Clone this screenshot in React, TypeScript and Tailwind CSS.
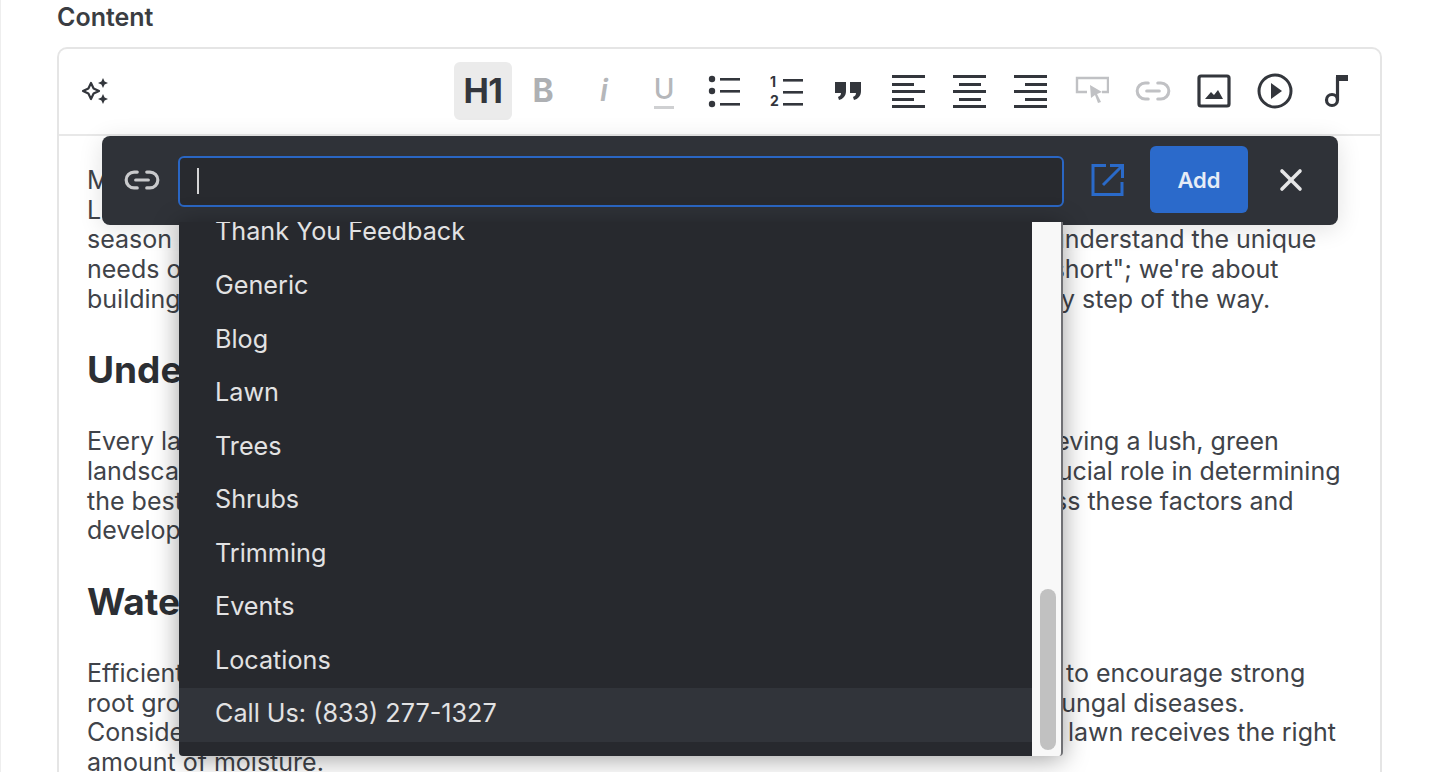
import { Link2, X } from 'lucide-react';

const menuItems = ['Generic', 'Blog', 'Lawn', 'Trees', 'Shrubs', 'Trimming', 'Events', 'Locations'];

function BulletList() {
    return (
        <svg width="34" height="34" viewBox="0 0 34 34" fill="currentColor">
            <circle cx="4" cy="5" r="3.2" />
            <circle cx="4" cy="17" r="3.2" />
            <circle cx="4" cy="30" r="3.2" />
            <rect x="12" y="4" width="20" height="2.6" />
            <rect x="12" y="16" width="20" height="2.6" />
            <rect x="12" y="29" width="20" height="2.6" />
        </svg>
    );
}

function AlignIcon({ kind }: { kind: 'left' | 'center' | 'right' }) {
    const short = kind === 'left' ? 0 : kind === 'center' ? 6 : 11;
    return (
        <svg width="34" height="34" viewBox="0 0 34 34" fill="currentColor">
            <rect x="0" y="1" width="33" height="3" />
            <rect x={short} y="9" width="22" height="3" />
            <rect x="0" y="16" width="33" height="3" />
            <rect x={short} y="24" width="22" height="3" />
            <rect x="0" y="31" width="33" height="3" />
        </svg>
    );
}

function Line({ left, right, className }: { left: string; right?: string; className?: string }) {
    return (
        <div className="flex h-[29.7px] items-center whitespace-nowrap">
            <span className="w-[92px] shrink-0">{left}</span>
            {right && <span className={className}>{right}</span>}
        </div>
    );
}

export default function App() {
    return (
        <div className="h-[772px] overflow-hidden border-l border-[#eeeeee] bg-white pl-[56px] pr-[56px] font-['Inter',sans-serif] text-[#404349]">
            <div className="flex h-[47px] items-start pt-[3px] text-[25px] font-semibold leading-[28px] text-[#3a3d42]">Content</div>

            <div className="relative h-[780px] rounded-t-[10px] border-2 border-b-0 border-[#e5e5e5]">
                <div className="flex h-[87px] items-center justify-between border-b-2 border-[#e8e8e8] pb-[2px] pl-[22px] pr-[12px]">
                    <svg width="30" height="30" viewBox="0 0 30 30" className="text-[#33363c]">
                        <path d="M10 7l2.6 5.4L18 15l-5.4 2.6L10 23l-2.6-5.4L2 15l5.4-2.6z" fill="none" stroke="currentColor" strokeWidth="2.2" strokeLinejoin="round" />
                        <path d="M22 2l1.6 3.4L27 7l-3.4 1.6L22 12l-1.6-3.4L17 7l3.4-1.6z" fill="currentColor" />
                        <path d="M22 18l1.6 3.4L27 23l-3.4 1.6L22 28l-1.6-3.4L17 23l3.4-1.6z" fill="currentColor" />
                    </svg>
                    <div className="flex items-center text-[#33363c]">
                        <span className="flex h-[58px] w-[58px] items-center justify-center rounded-[6px] bg-[#ebebeb] text-[34px] font-bold tracking-[-0.5px]">H1</span>
                        <span className="flex w-[62px] justify-center text-[32px] font-bold text-[#aeb0b3]">B</span>
                        <span className="flex w-[60px] justify-center text-[30px] font-semibold italic text-[#b5b7ba]">i</span>
                        <span className="flex w-[60px] justify-center text-[28px] font-medium text-[#b5b7ba]">
                            <span className="border-b-[3px] border-[#cfd0d2] leading-[34px]">U</span>
                        </span>
                        <span className="flex w-[62px] justify-center"><BulletList /></span>
                        <span className="flex w-[62px] justify-center">
                            <svg width="34" height="34" viewBox="0 0 34 34" fill="currentColor">
                                <text x="0" y="13" fontSize="14" fontWeight="700" fontFamily="Inter">1</text>
                                <text x="0" y="32" fontSize="14" fontWeight="700" fontFamily="Inter">2</text>
                                <rect x="13" y="5" width="20" height="2.6" />
                                <rect x="13" y="17" width="20" height="2.6" />
                                <rect x="13" y="29" width="20" height="2.6" />
                            </svg>
                        </span>
                        <span className="flex w-[60px] justify-center">
                            <svg width="28" height="22" viewBox="0 0 28 22" fill="currentColor">
                                <path d="M1 2h11v9c0 5-3 8-7 9l-1-3c2-1 3-2 3-4H1zM16 2h11v9c0 5-3 8-7 9l-1-3c2-1 3-2 3-4h-6z" />
                            </svg>
                        </span>
                        <span className="flex w-[62px] justify-center"><AlignIcon kind="left" /></span>
                        <span className="flex w-[60px] justify-center"><AlignIcon kind="center" /></span>
                        <span className="flex w-[62px] justify-center"><AlignIcon kind="right" /></span>
                        <span className="flex w-[60px] justify-center text-[#c0c1c4]">
                            <svg width="34" height="30" viewBox="0 0 34 30" fill="none" stroke="currentColor" strokeWidth="2.4">
                                <path d="M12 16H2V2h31v14h-6" />
                                <path d="M15 9l12 7-5 2 4 8-3 1-3-8-4 3z" fill="currentColor" stroke="none" />
                            </svg>
                        </span>
                        <span className="flex w-[62px] justify-center">
                            <Link2 className="h-[38px] w-[38px] text-[#c0c1c4]" strokeWidth={1.9} />
                        </span>
                        <span className="flex w-[60px] justify-center">
                            <svg width="34" height="34" viewBox="0 0 34 34" fill="none" stroke="currentColor" strokeWidth="3.2">
                                <rect x="2" y="2" width="30" height="30" rx="2" />
                                <path d="M8 25l6-7 3 3 4-5 5 9z" fill="currentColor" stroke="none" />
                            </svg>
                        </span>
                        <span className="flex w-[62px] justify-center">
                            <svg width="36" height="36" viewBox="0 0 36 36" fill="none" stroke="currentColor" strokeWidth="3">
                                <circle cx="18" cy="18" r="16" />
                                <path d="M14 10l11 8-11 8z" fill="currentColor" stroke="none" />
                            </svg>
                        </span>
                        <span className="flex w-[62px] justify-center">
                            <svg width="26" height="34" viewBox="0 0 26 34" fill="none" stroke="currentColor" strokeWidth="3.2">
                                <circle cx="8" cy="26" r="5.5" />
                                <path d="M13.5 26V3" />
                                <path d="M12 1h12v6H12z" fill="currentColor" stroke="none" />
                            </svg>
                        </span>
                    </div>
                </div>

                <div className="pl-[28px] text-[25px] leading-[30px]">
                    <div className="pt-[29px]">
                        <Line left="M" />
                        <Line left="L" />
                        <Line left="season" right="understand the unique" className="ml-[871px]" />
                        <Line left="needs of" right={'"short"; we\'re about'} className="ml-[861px]" />
                        <Line left="building" right="every step of the way." className="ml-[830px]" />
                    </div>
                    <h2 className="mt-[35px] h-[44px] text-[37px] font-bold leading-[44px] text-[#2c2f34]">Understanding</h2>
                    <div className="mt-[34px]">
                        <Line left="Every lawn" right="achieving a lush, green" className="ml-[827px]" />
                        <Line left="landscape" right="crucial role in determining" className="ml-[855px]" />
                        <Line left="the best" right="assess these factors and" className="ml-[820px]" />
                        <Line left="develop" />
                    </div>
                    <h2 className="mt-[35px] h-[44px] text-[37px] font-bold leading-[44px] text-[#2c2f34]">Watering</h2>
                    <div className="mt-[34px]">
                        <Line left="Efficient" right="to encourage strong" className="ml-[887px]" />
                        <Line left="root growth" right="fungal diseases." className="ml-[873px]" />
                        <Line left="Consider" right="lawn receives the right" className="ml-[889px]" />
                        <Line left="amount of moisture." />
                    </div>
                </div>

                {/* link popover */}
                <div className="absolute left-[43px] top-[87px] flex h-[89px] w-[1236px] items-center rounded-[8px] bg-[#2f3238] pb-[2px] pl-[21px] pr-[24px] shadow-[0_4px_24px_rgba(0,0,0,0.12)]">
                    <Link2 className="h-[38px] w-[38px] shrink-0 text-[#c9cacc]" strokeWidth={2} />
                    <div className="ml-[17px] mt-[3px] flex h-[51px] w-[886px] shrink-0 items-center rounded-[6px] border-2 border-[#2a66c3] bg-[#282a2f] pl-[17px]">
                        <span className="h-[26px] w-[2px] bg-[#d5d5d6]" />
                    </div>
                    <svg width="36" height="36" viewBox="0 0 36 36" fill="none" stroke="currentColor" strokeWidth="3" className="ml-[26px] shrink-0 text-[#2a6ac9]">
                        <path d="M16 3.5H3v29h29V20" />
                        <path d="M13 23L32 4" />
                        <path d="M20 3.5h12.5V16" />
                    </svg>
                    <button className="ml-[24px] h-[67px] w-[98px] shrink-0 rounded-[6px] bg-[#2b6acb] text-[22px] font-semibold leading-[60px] text-[#e6ecf6]">Add</button>
                    <X className="ml-[25px] h-[36px] w-[36px] shrink-0 text-[#e6e6e7]" strokeWidth={2.4} />

                    {/* dropdown */}
                    <div className="absolute left-[77px] top-[86px] flex h-[534px] w-[884px] overflow-hidden rounded-b-[4px] border-r-2 border-[#6f7074] bg-[#f8f8f8] shadow-[0_3px_26px_rgba(0,0,0,0.38)]">
                        <div className="flex w-[853px] flex-col bg-[#27292e] pl-[36px] text-[25.2px] text-[#e2e2e3]">
                            <div className="h-[38px] shrink-0 leading-[18px]">Thank You Feedback</div>
                            {menuItems.map((item) => (
                                <div key={item} className="h-[53.5px] shrink-0 leading-[50px]">{item}</div>
                            ))}
                            <div className="-ml-[36px] h-[54px] shrink-0 bg-[#31343a] pl-[36px] leading-[50px]">Call Us: (833) 277-1327</div>
                        </div>
                        <div className="flex-1 pl-[8px] pt-[367px]">
                            <div className="h-[161px] w-[16px] rounded-full bg-[#c1c1c1]" />
                        </div>
                    </div>
                </div>
            </div>
        </div>
    );
}
